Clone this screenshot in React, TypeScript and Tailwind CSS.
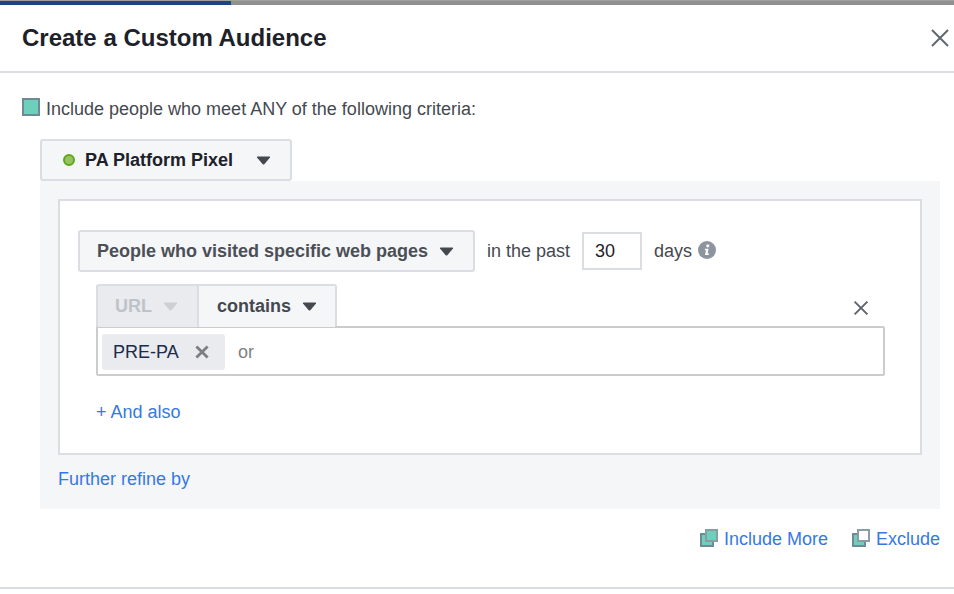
import React from 'react';

const Caret = ({ className }: { className: string }) => (
  <svg width="15" height="9" viewBox="0 0 15 9" className={className}>
    <path d="M1 1.5 Q0.6 0.5 1.8 0.5 H13.2 Q14.4 0.5 14 1.5 L8.5 8 Q7.5 9 6.5 8 Z" fill="currentColor" />
  </svg>
);

const Cross = ({ size, width, className }: { size: number; width: number; className: string }) => (
  <svg width={size} height={size} viewBox="0 0 20 20" className={className}>
    <path d="M2 2 L18 18 M18 2 L2 18" stroke="currentColor" strokeWidth={width} fill="none" />
  </svg>
);

const Squares = ({ filled }: { filled: boolean }) => (
  <svg width="18" height="18" viewBox="0 0 18 18" className="shrink-0">
    <rect x="1" y="5" width="12" height="12" fill="#6ed0bb" stroke="#6f8a96" strokeWidth="2" />
    <rect x="6" y="1" width="11" height="11" fill={filled ? '#6ed0bb' : '#ffffff'} stroke="#8a9ca6" strokeWidth="2" />
  </svg>
);

export default function App() {
  return (
    <div className="w-[954px] h-[594px] overflow-hidden bg-white font-['Liberation_Sans',Arial,sans-serif] text-[18px] text-[#444950]">
      <div className="h-[5px] flex border-t border-[#a0a0a0] bg-[#909090]">
        <div className="w-[231px] bg-[#1c4587]" />
      </div>

      <div className="h-[68px] border-b-2 border-[#dadde1] pl-[22px] pr-[4px] flex items-center justify-between">
        <h1 className="text-[24px] font-bold text-[#1d2129]">Create a Custom Audience</h1>
        <Cross size={20} width={2} className="text-[#606770] mb-[1px]" />
      </div>

      <div className="pt-[25px] pl-[22px] pr-[14px]">
        <div className="flex items-center gap-[6px] h-[18px]">
          <div className="w-[18px] h-[18px] bg-[#6ed0bb] border-2 border-[#6f8a96]" />
          <span className="text-[#444950] mt-[4px]">Include people who meet ANY of the following criteria:</span>
        </div>

        <div className="ml-[18px] mt-[23px]">
          <div className="w-[252px] h-[42px] bg-[#f5f6f7] border-2 border-[#dadde1] rounded-[3px] flex items-center pl-[21px]">
            <span className="w-[12px] h-[12px] rounded-full bg-[#96c35d] border-2 border-[#5fa81e]" />
            <span className="ml-[10px] font-bold text-[#1d2129]">PA Platform Pixel</span>
            <Caret className="ml-[23px] text-[#444950]" />
          </div>

          <div className="bg-[#f5f6f7] h-[328px] px-[18px] pt-[18px]">
            <div className="h-[256px] bg-white border-2 border-[#dadde1] pt-[29px] pl-[18px] pr-[35px]">
              <div className="flex items-center">
                <div className="w-[397px] h-[42px] bg-[#f5f6f7] border-2 border-[#dadde1] rounded-[3px] flex items-center pl-[17px]">
                  <span className="font-bold text-[#4b4f56]">People who visited specific web pages</span>
                  <Caret className="ml-[11px] text-[#444950]" />
                </div>
                <span className="ml-[12px]">in the past</span>
                <div className="ml-[12px] w-[60px] h-[38px] border-2 border-[#dadde1] flex items-center pl-[11px] text-[#1d2129]">30</div>
                <span className="ml-[12px]">days</span>
                <svg width="18" height="18" viewBox="0 0 18 18" className="ml-[6px] mb-[2px]">
                  <circle cx="9" cy="9" r="9" fill="#8d949e" />
                  <circle cx="9.8" cy="4.8" r="1.6" fill="#fff" />
                  <path d="M7 7.8 H10.6 L9.6 12.6 H11 L10.7 14 H7 L8 9.2 H6.8 Z" fill="#fff" />
                </svg>
              </div>

              <div className="ml-[18px] mt-[12px] relative">
                <div className="flex h-[43px] w-[241px] border-2 border-b-0 border-[#dadde1] rounded-t-[3px]">
                  <div className="w-[101px] bg-[#e9ebee] border-r-2 border-[#dadde1] flex items-center pl-[17px]">
                    <span className="font-bold text-[#bec3c9]">URL</span>
                    <Caret className="ml-[11px] text-[#ccd0d5]" />
                  </div>
                  <div className="flex-1 bg-[#f5f6f7] flex items-center pl-[18px]">
                    <span className="font-bold text-[#444950]">contains</span>
                    <Caret className="ml-[11px] text-[#444950]" />
                  </div>
                </div>
                <Cross size={16} width={2.5} className="absolute right-[16px] top-[16px] text-[#606770]" />
                <div className="h-[50px] -mt-[1px] border-2 border-[#cccccc] rounded-[2px] bg-white flex items-center pl-[4px] pt-[2px]">
                  <div className="w-[123px] h-[36px] bg-[#e9ebee] rounded-[3px] flex items-center pl-[11px]">
                    <span className="text-[#1c2b4a]">PRE-PA</span>
                    <Cross size={14} width={4} className="ml-[16px] text-[#7f7f7f]" />
                  </div>
                  <span className="ml-[13px] text-[#7f7f7f]">or</span>
                </div>
                <div className="mt-[27px] text-[#3578e5] leading-[18px]">+ And also</div>
              </div>
            </div>
            <div className="mt-[15px] text-[#3578e5] leading-[18px]">Further refine by</div>
          </div>
        </div>

        <div className="mt-[18px] flex justify-end items-center h-[22px]">
          <Squares filled />
          <span className="ml-[6px] text-[#3578e5] mt-[3px]">Include More</span>
          <span className="ml-[24px]"><Squares filled={false} /></span>
          <span className="ml-[6px] text-[#3578e5] mt-[3px]">Exclude</span>
        </div>
      </div>

      <div className="mt-[38px] border-t-2 border-[#dadde1]" />
    </div>
  );
}
